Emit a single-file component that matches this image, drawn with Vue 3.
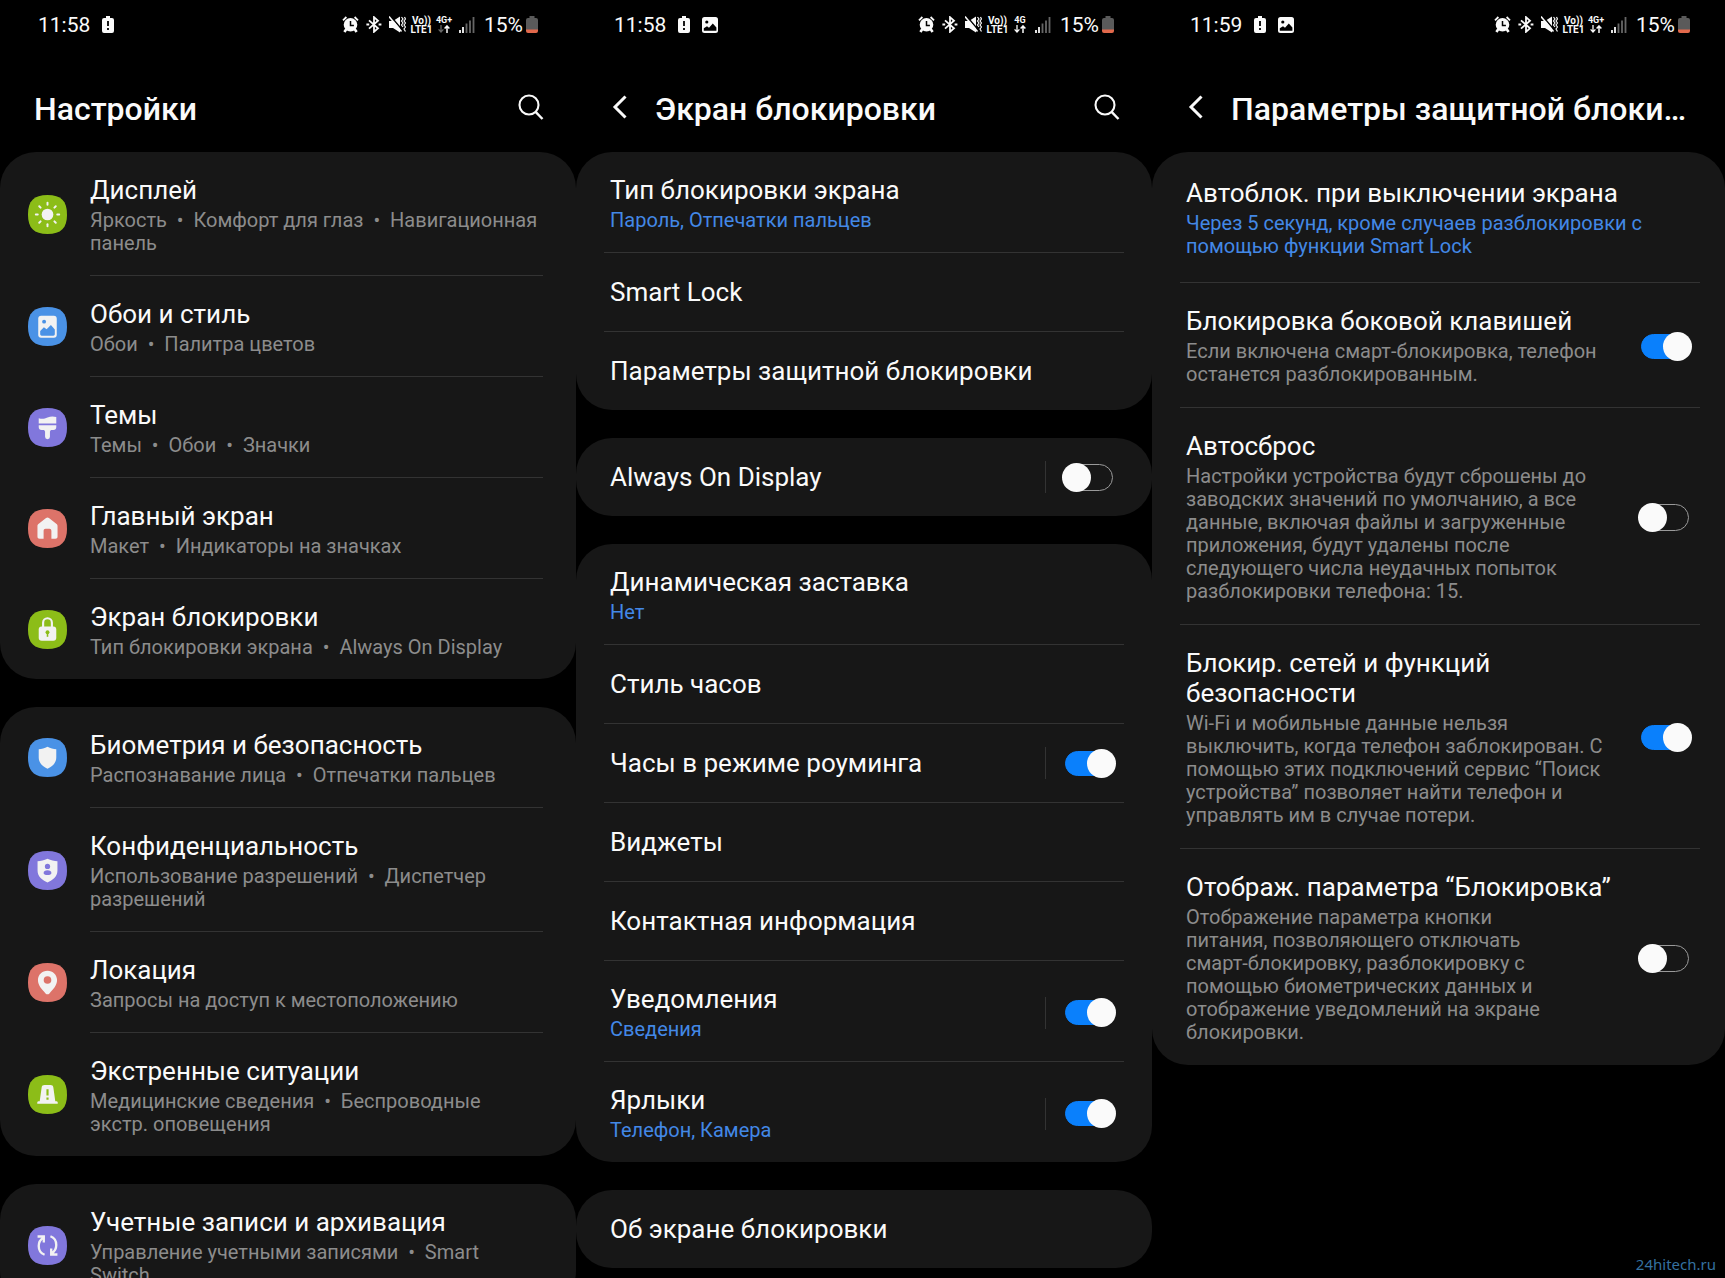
<script setup>
import { reactive } from 'vue'

// `\n` in a text is a line break, rendered through white-space: pre-line.
const screens = reactive([
  {
    id: 'settings',
    time: '11:58',
    shot: false,
    net: '4G+',
    title: 'Настройки',
    back: false,
    search: true,
    groups: [
      [
        { icon: 'sun', color: '#8cbd18', title: 'Дисплей', sub: 'Яркость  •  Комфорт для глаз  •  Навигационная\nпанель' },
        { icon: 'wallpaper', color: '#4a92e6', title: 'Обои и стиль', sub: 'Обои  •  Палитра цветов' },
        { icon: 'brush', color: '#8177dc', title: 'Темы', sub: 'Темы  •  Обои  •  Значки' },
        { icon: 'home', color: '#dd7369', title: 'Главный экран', sub: 'Макет  •  Индикаторы на значках' },
        { icon: 'lock', color: '#8cbd18', title: 'Экран блокировки', sub: 'Тип блокировки экрана  •  Always On Display' },
      ],
      [
        { icon: 'shield', color: '#4a92e6', title: 'Биометрия и безопасность', sub: 'Распознавание лица  •  Отпечатки пальцев' },
        { icon: 'privacy', color: '#8177dc', title: 'Конфиденциальность', sub: 'Использование разрешений  •  Диспетчер\nразрешений' },
        { icon: 'pin', color: '#dd7369', title: 'Локация', sub: 'Запросы на доступ к местоположению' },
        { icon: 'siren', color: '#8cbd18', title: 'Экстренные ситуации', sub: 'Медицинские сведения  •  Беспроводные\nэкстр. оповещения' },
      ],
      [
        { icon: 'sync', color: '#8177dc', title: 'Учетные записи и архивация', sub: 'Управление учетными записями  •  Smart\nSwitch' },
      ],
    ],
  },
  {
    id: 'lockscreen',
    time: '11:58',
    shot: true,
    net: '4G',
    title: 'Экран блокировки',
    back: true,
    search: true,
    groups: [
      [
        { title: 'Тип блокировки экрана', sub: 'Пароль, Отпечатки пальцев', accent: true },
        { title: 'Smart Lock' },
        { title: 'Параметры защитной блокировки' },
      ],
      [{ title: 'Always On Display', on: false, split: true }],
      [
        { title: 'Динамическая заставка', sub: 'Нет', accent: true },
        { title: 'Стиль часов' },
        { title: 'Часы в режиме роуминга', on: true, split: true },
        { title: 'Виджеты' },
        { title: 'Контактная информация' },
        { title: 'Уведомления', sub: 'Сведения', accent: true, on: true, split: true },
        { title: 'Ярлыки', sub: 'Телефон, Камера', accent: true, on: true, split: true },
      ],
      [{ title: 'Об экране блокировки' }],
    ],
  },
  {
    id: 'secure',
    time: '11:59',
    shot: true,
    net: '4G+',
    title: 'Параметры защитной блокировки',
    back: true,
    search: false,
    groups: [
      [
        { title: 'Автоблок. при выключении экрана', sub: 'Через 5 секунд, кроме случаев разблокировки с\nпомощью функции Smart Lock', accent: true, roomy: true },
        { title: 'Блокировка боковой клавишей', sub: 'Если включена смарт-блокировка, телефон\nостанется разблокированным.', on: true },
        { title: 'Автосброс', sub: 'Настройки устройства будут сброшены до\nзаводских значений по умолчанию, а все\nданные, включая файлы и загруженные\nприложения, будут удалены после\nследующего числа неудачных попыток\nразблокировки телефона: 15.', on: false },
        { title: 'Блокир. сетей и функций\nбезопасности', sub: 'Wi-Fi и мобильные данные нельзя\nвыключить, когда телефон заблокирован. С\nпомощью этих подключений сервис “Поиск\nустройства” позволяет найти телефон и\nуправлять им в случае потери.', on: true },
        { title: 'Отображ. параметра “Блокировка”', sub: 'Отображение параметра кнопки\nпитания, позволяющего отключать\nсмарт-блокировку, разблокировку с\nпомощью биометрических данных и\nотображение уведомлений на экране\nблокировки.', on: false },
      ],
    ],
  },
])

const rays = [0, 45, 90, 135, 180, 225, 270, 315]
const isSwitch = (row) => row.on !== undefined
</script>

<template>
  <main class="page">
    <section v-for="s in screens" :key="s.id" class="phone" :class="`phone--${s.id}`">
      <div class="status">
        <span class="status__time">{{ s.time }}</span>
        <svg class="status__note" viewBox="0 0 12 17" width="12" height="17" aria-hidden="true">
          <path d="M4 0h4v2h2a2 2 0 0 1 2 2v11a2 2 0 0 1-2 2H2a2 2 0 0 1-2-2V4a2 2 0 0 1 2-2h2z" fill="#fafafa" />
          <path d="M6 5v5M6 12v2" stroke="#000" stroke-width="1.8" />
        </svg>
        <svg v-if="s.shot" class="status__shot" viewBox="0 0 16 16" width="16" height="16" aria-hidden="true">
          <rect width="16" height="16" rx="2.5" fill="#fafafa" />
          <circle cx="4.8" cy="5" r="1.6" fill="#000" />
          <path d="M1.8 13.8v-2.6l3.2-2 2 1.6 3.8-4.2 3.6 4v3.2z" fill="#000" />
        </svg>

        <div class="status__right">
          <svg viewBox="0 0 17 17" width="17" height="17" aria-hidden="true">
            <path d="M1 4.4 4.4 1M16 4.4 12.6 1" stroke="#fafafa" stroke-width="1.8" />
            <circle cx="8.5" cy="8.8" r="6.8" fill="#fafafa" />
            <path d="M4.4 13 2.4 16M12.6 13l2 3" stroke="#fafafa" stroke-width="2.6" />
            <path d="M8.5 5v4.4h3.4" stroke="#000" stroke-width="1.5" fill="none" />
          </svg>
          <svg viewBox="0 0 16 17" width="16" height="17" aria-hidden="true">
            <path d="M3 4.4 12 12.2 8 15.8V1.2l4 3.6L3 12.6" fill="none" stroke="#fafafa" stroke-width="1.8" />
            <path d="M.4 8.5h2.8M12.6 8.5h2.8" stroke="#fafafa" stroke-width="2" />
          </svg>
          <svg viewBox="0 0 17 17" width="17" height="17" aria-hidden="true">
            <path d="M0 5h4l7-4.500v16L4 12H0z" fill="#fafafa" />
            <path d="M1.500 0l13 15.500" stroke="#000" stroke-width="1.500" />
            <path d="M0 .5l12.500 15" stroke="#fafafa" stroke-width="1.500" />
            <path d="M12.500 1l1.500 2-1.500 2L14 7l-1.500 2 1.500 2M15.500 1l1 2-1.500 2 1.500 2L15 9l1.500 2-1.500 2 1.500 2.500" fill="none" stroke="#fafafa" stroke-width="1.200" />
          </svg>
          <span class="status__tiny status__tiny--lte">Vo))<br />LTE1</span>
          <span class="status__tiny status__tiny--net">
            {{ s.net }}
            <svg viewBox="0 0 12 8" width="12" height="8" aria-hidden="true">
              <path
                d="M3 0v7M.6 4.400 3 7l2.400-2.600"
                fill="none"
                :stroke="s.id === 'settings' ? '#666' : '#fafafa'"
                stroke-width="1.300"
              />
              <path d="M9 8V1M6.600 3.600 9 1l2.400 2.600" fill="none" stroke="#fafafa" stroke-width="1.500" />
            </svg>
          </span>
          <svg class="status__signal" viewBox="0 0 16 16" width="16" height="16" aria-hidden="true">
            <path d="M1 16v-3M4 16v-6" stroke="#fafafa" stroke-width="1.800" />
            <path d="M7.500 16V6.500M11 16V3.500M14.500 16V0" stroke="#666" stroke-width="1.800" />
          </svg>
          <span class="status__time">15%</span>
          <svg class="status__battery" viewBox="0 0 12 17" width="12" height="17" aria-hidden="true">
            <path d="M3.500 0h5v2H10a2 2 0 0 1 2 2v10H0V4a2 2 0 0 1 2-2h1.500z" fill="#5a5a5a" />
            <path d="M0 13.500h12V15a2 2 0 0 1-2 2H2a2 2 0 0 1-2-2z" fill="#e2694c" />
          </svg>
        </div>
      </div>

      <header class="bar">
        <button v-if="s.back" class="bar__back" type="button" aria-label="Назад">
          <svg viewBox="0 0 16 24" width="16" height="24">
            <path d="M13.500 1.500 3 12l10.500 10.500" fill="none" stroke="#fafafa" stroke-width="3" />
          </svg>
        </button>
        <h1 class="bar__title">{{ s.title }}</h1>
        <button v-if="s.search" class="bar__search" type="button" aria-label="Поиск">
          <svg viewBox="0 0 26 26" width="26" height="26">
            <circle cx="11" cy="11" r="9.500" fill="none" stroke="#fafafa" stroke-width="2.100" />
            <path d="M17.600 17.800 24.500 25" stroke="#fafafa" stroke-width="2.400" />
          </svg>
        </button>
      </header>

      <ul v-for="(group, g) in s.groups" :key="g" class="card">
        <li v-for="(row, r) in group" :key="row.title" class="row" :class="{ 'row--single': !row.sub, 'row--roomy': row.roomy }">
          <svg v-if="row.icon" class="row__icon" viewBox="0 0 40 40" width="39" height="39" aria-hidden="true">
            <path d="M20 0C34 0 40 6 40 20S34 40 20 40 0 34 0 20 6 0 20 0z" :fill="row.color" />
            <g v-if="row.icon === 'sun'" fill="#f2f2f2">
              <circle cx="20" cy="20" r="6" />
              <rect v-for="a in rays" :key="a" x="19" y="7" width="2" height="4" rx="1" :transform="`rotate(${a} 20 20)`" />
            </g>
            <g v-else-if="row.icon === 'wallpaper'">
              <rect x="10.500" y="9" width="19" height="22.500" rx="3" fill="#f2f2f2" />
              <circle cx="16.500" cy="15" r="2" :fill="row.color" />
              <path d="M12.500 28v-3.500l3.800-3.700 2.800 2 4.400-4.300 4 4.500V28a1.500 1.500 0 0 1-1.500 1.500H14a1.500 1.500 0 0 1-1.500-1.500z" :fill="row.color" />
            </g>
            <g v-else-if="row.icon === 'brush'" fill="#f2f2f2">
              <path d="M11 10.500c4 1.200 6 .4 9-.8 3-1.100 6-1.200 9-.4V16H11z" />
              <path d="M11 17.800h18v1.700c0 2-1 3-3 3h-2.500l-1 1.500v5.500a2.500 2.500 0 0 1-5 0V24l-1-1.500H14c-2 0-3-1-3-3z" />
            </g>
            <path
              v-else-if="row.icon === 'home'"
              d="M18.500 9.200a2.500 2.500 0 0 1 3 0l7.800 6.300c.8.600 1 1.300 1 2.200v10.500c0 1.500-.8 2.300-2.300 2.300h-4V22.500c0-1.500-.8-2.300-2-2.300h-4c-1.200 0-2 .8-2 2.300v8h-4c-1.500 0-2.300-.8-2.300-2.300V17.700c0-.9.200-1.600 1-2.200z"
              fill="#f2f2f2"
            />
            <g v-else-if="row.icon === 'lock'">
              <path d="M15.500 18v-5a4.500 4.500 0 0 1 9 0v5" fill="none" stroke="#f2f2f2" stroke-width="2.200" />
              <rect x="11" y="17" width="18" height="14.500" rx="3" fill="#f2f2f2" />
              <circle cx="20" cy="22.800" r="2" :fill="row.color" />
              <path d="M20 23v4.500" :stroke="row.color" stroke-width="1.600" />
            </g>
            <path
              v-else-if="row.icon === 'shield'"
              d="M20 9c3 1.700 6 2.300 9 2.500v8.500c0 6-4.500 9.500-9 11.500-4.500-2-9-5.500-9-11.500v-8.500c3-.2 6-.8 9-2.500z"
              fill="#f2f2f2"
            />
            <g v-else-if="row.icon === 'privacy'">
              <path d="M20 8c3.500 1.800 7 2.300 10.200 2.500V20c0 6.500-5 10-10.200 12.200C14.800 30 9.800 26.500 9.800 20v-9.500C13 10.300 16.500 9.800 20 8z" fill="#f2f2f2" />
              <circle cx="20" cy="15.800" r="2.700" :fill="row.color" />
              <path d="M16 22.500c0-2 1.600-2.800 4-2.800s4 .8 4 2.800c0 1.400-1.600 2.200-4 2.200s-4-.8-4-2.200z" :fill="row.color" />
            </g>
            <g v-else-if="row.icon === 'pin'">
              <path d="M20 8c5.500 0 9.800 4.200 9.800 9.500 0 5.500-4 9.500-7.800 13.700-1.200 1.300-2.800 1.300-4 0-3.800-4.200-7.800-8.200-7.800-13.700C10.200 12.200 14.500 8 20 8z" fill="#f2f2f2" />
              <circle cx="20" cy="17.500" r="3.900" :fill="row.color" />
            </g>
            <g v-else-if="row.icon === 'siren'">
              <path d="M9.500 29.500v-1.200c0-1 .6-1.500 2.500-1.500l2-14c.3-1.800 1.200-2.500 3-2.500h6c1.800 0 2.700.7 3 2.500l2 14c1.900 0 2.500.5 2.500 1.500v1.200z" fill="#f2f2f2" />
              <path d="M20 14.500v6.500M20 23v2.500" :stroke="row.color" stroke-width="2.200" />
            </g>
            <g v-else-if="row.icon === 'sync'" fill="none" stroke="#f2f2f2" stroke-width="2.400">
              <path d="M17 29.500c-3.600-1.300-6-4.900-6-9 0-3.700 1.800-6.800 4.800-8.500M9.800 10.800h6.400v6.200" />
              <path d="M23 10.500c3.600 1.300 6 4.900 6 9 0 3.700-1.800 6.800-4.800 8.500M30.200 29.200h-6.400V23" />
            </g>
          </svg>

          <div class="row__body">
            <label v-if="isSwitch(row)" class="row__text" :for="`${s.id}-${g}-${r}`">
              <span class="row__title">{{ row.title }}</span>
              <span v-if="row.sub" class="row__sub" :class="{ 'row__sub--accent': row.accent }">{{ row.sub }}</span>
            </label>
            <a v-else class="row__text" href="#">
              <span class="row__title">{{ row.title }}</span>
              <span v-if="row.sub" class="row__sub" :class="{ 'row__sub--accent': row.accent }">{{ row.sub }}</span>
            </a>
            <span v-if="row.split" class="row__split"></span>
            <input
              v-if="isSwitch(row)"
              :id="`${s.id}-${g}-${r}`"
              v-model="row.on"
              class="switch"
              type="checkbox"
              role="switch"
            />
          </div>
        </li>
      </ul>
    </section>

    <a class="watermark" href="#">24hitech.ru</a>
  </main>
</template>

<style>
body {
  margin: 0;
  background: #000;
}
</style>

<style scoped>
.page {
  position: relative;
  display: grid;
  grid-template-columns: 192fr 192fr 191fr;
  height: 100vh;
  overflow: hidden;
  background: #000;
  color: #fafafa;
  font-family: Roboto, "Noto Sans", sans-serif;
}

.phone {
  --edge: 38px;
  min-width: 0;
}
.phone--secure {
  --edge: 35px;
}

/* status bar */
.status {
  display: flex;
  align-items: center;
  height: 49px;
  padding: 0 var(--edge) 0 38px;
}
.status__time {
  font-size: 21px;
  line-height: 24px;
}
.status__note {
  margin-left: 12px;
}
.status__shot {
  margin-left: 12px;
}
.status__right {
  display: flex;
  align-items: center;
  gap: 7px;
  margin-left: auto;
}
.status__tiny {
  display: flex;
  flex-direction: column;
  align-items: center;
  font-size: 9px;
  font-weight: 700;
  line-height: 9px;
  text-align: center;
}
.status__tiny--lte {
  width: 21px;
  margin-left: -2px;
  font-size: 10px;
}
.status__tiny--net {
  width: 16px;
  margin-left: -3px;
}
.status__signal {
  margin-right: 2px;
}
.status__battery {
  margin-left: -4px;
}

/* title bar */
.bar {
  display: flex;
  align-items: center;
  height: 103px;
  padding: 12px 32px 0 34px;
  box-sizing: border-box;
}
.bar__title {
  flex: 1;
  min-width: 0;
  margin: 0;
  padding-top: 4px;
  overflow: hidden;
  font-size: 32px;
  font-weight: 500;
  line-height: 40px;
  text-overflow: ellipsis;
  white-space: nowrap;
}
.bar__back,
.bar__search {
  display: flex;
  padding: 0;
  border: 0;
  background: none;
}
.bar__back {
  margin: 0 27px 0 2px;
}

/* grouped lists */
.card {
  margin: 0 0 28px;
  padding: 0;
  border-radius: 36px;
  background: #171717;
  list-style: none;
}
.row {
  display: flex;
  align-items: center;
  padding: 0 28px;
}
.row__icon {
  flex: none;
  margin-right: 23px;
}
.row__body {
  display: flex;
  flex: 1;
  align-items: center;
  min-width: 0;
  padding: 23px 8px 20px 6px;
  border-bottom: 1px solid #333;
}
.row:last-child .row__body {
  border-bottom: 0;
}
.row__icon + .row__body {
  margin-right: 5px;
  padding-right: 0;
  padding-left: 0;
}
.row--single .row__body {
  min-height: 78px;
  padding-top: 0;
  padding-bottom: 0;
}
.phone--secure .row {
  padding-right: 25px;
}
.phone--secure .row__body {
  padding-bottom: 21px;
}
.phone--secure .row--roomy .row__body {
  padding-top: 26px;
  padding-bottom: 24px;
}
.row__text {
  display: flex;
  flex: 1;
  flex-direction: column;
  gap: 4px;
  color: inherit;
  text-decoration: none;
  white-space: pre-line;
}
.row__title {
  font-size: 26px;
  line-height: 30px;
}
.row__sub {
  color: #8c8c8c;
  font-size: 20px;
  line-height: 23px;
  white-space: pre;
}
.row__sub--accent {
  color: #4388e6;
}
.row__split {
  width: 1px;
  height: 32px;
  margin-right: 16px;
  background: #333;
}

/* the knob is taller than the track and overhangs its end */
.switch {
  position: relative;
  flex: none;
  width: 54px;
  height: 29px;
  margin: 0;
  appearance: none;
}
.switch::before {
  position: absolute;
  inset: 1px 3px;
  box-sizing: border-box;
  border: 1px solid #9a9a9a;
  border-radius: 14px;
  content: "";
}
.switch::after {
  position: absolute;
  top: 0;
  left: 0;
  width: 29px;
  height: 29px;
  border-radius: 50%;
  background: #fafafa;
  content: "";
}
.switch:checked::before {
  inset: 2px 3px;
  border-color: #0a80fc;
  background: #0a80fc;
}
.switch:checked::after {
  left: 25px;
}

.watermark {
  position: absolute;
  right: 9px;
  bottom: 3px;
  color: #35719f;
  font-family: "Noto Sans", sans-serif;
  font-size: 15px;
  line-height: 22px;
  text-decoration: none;
}
</style>
